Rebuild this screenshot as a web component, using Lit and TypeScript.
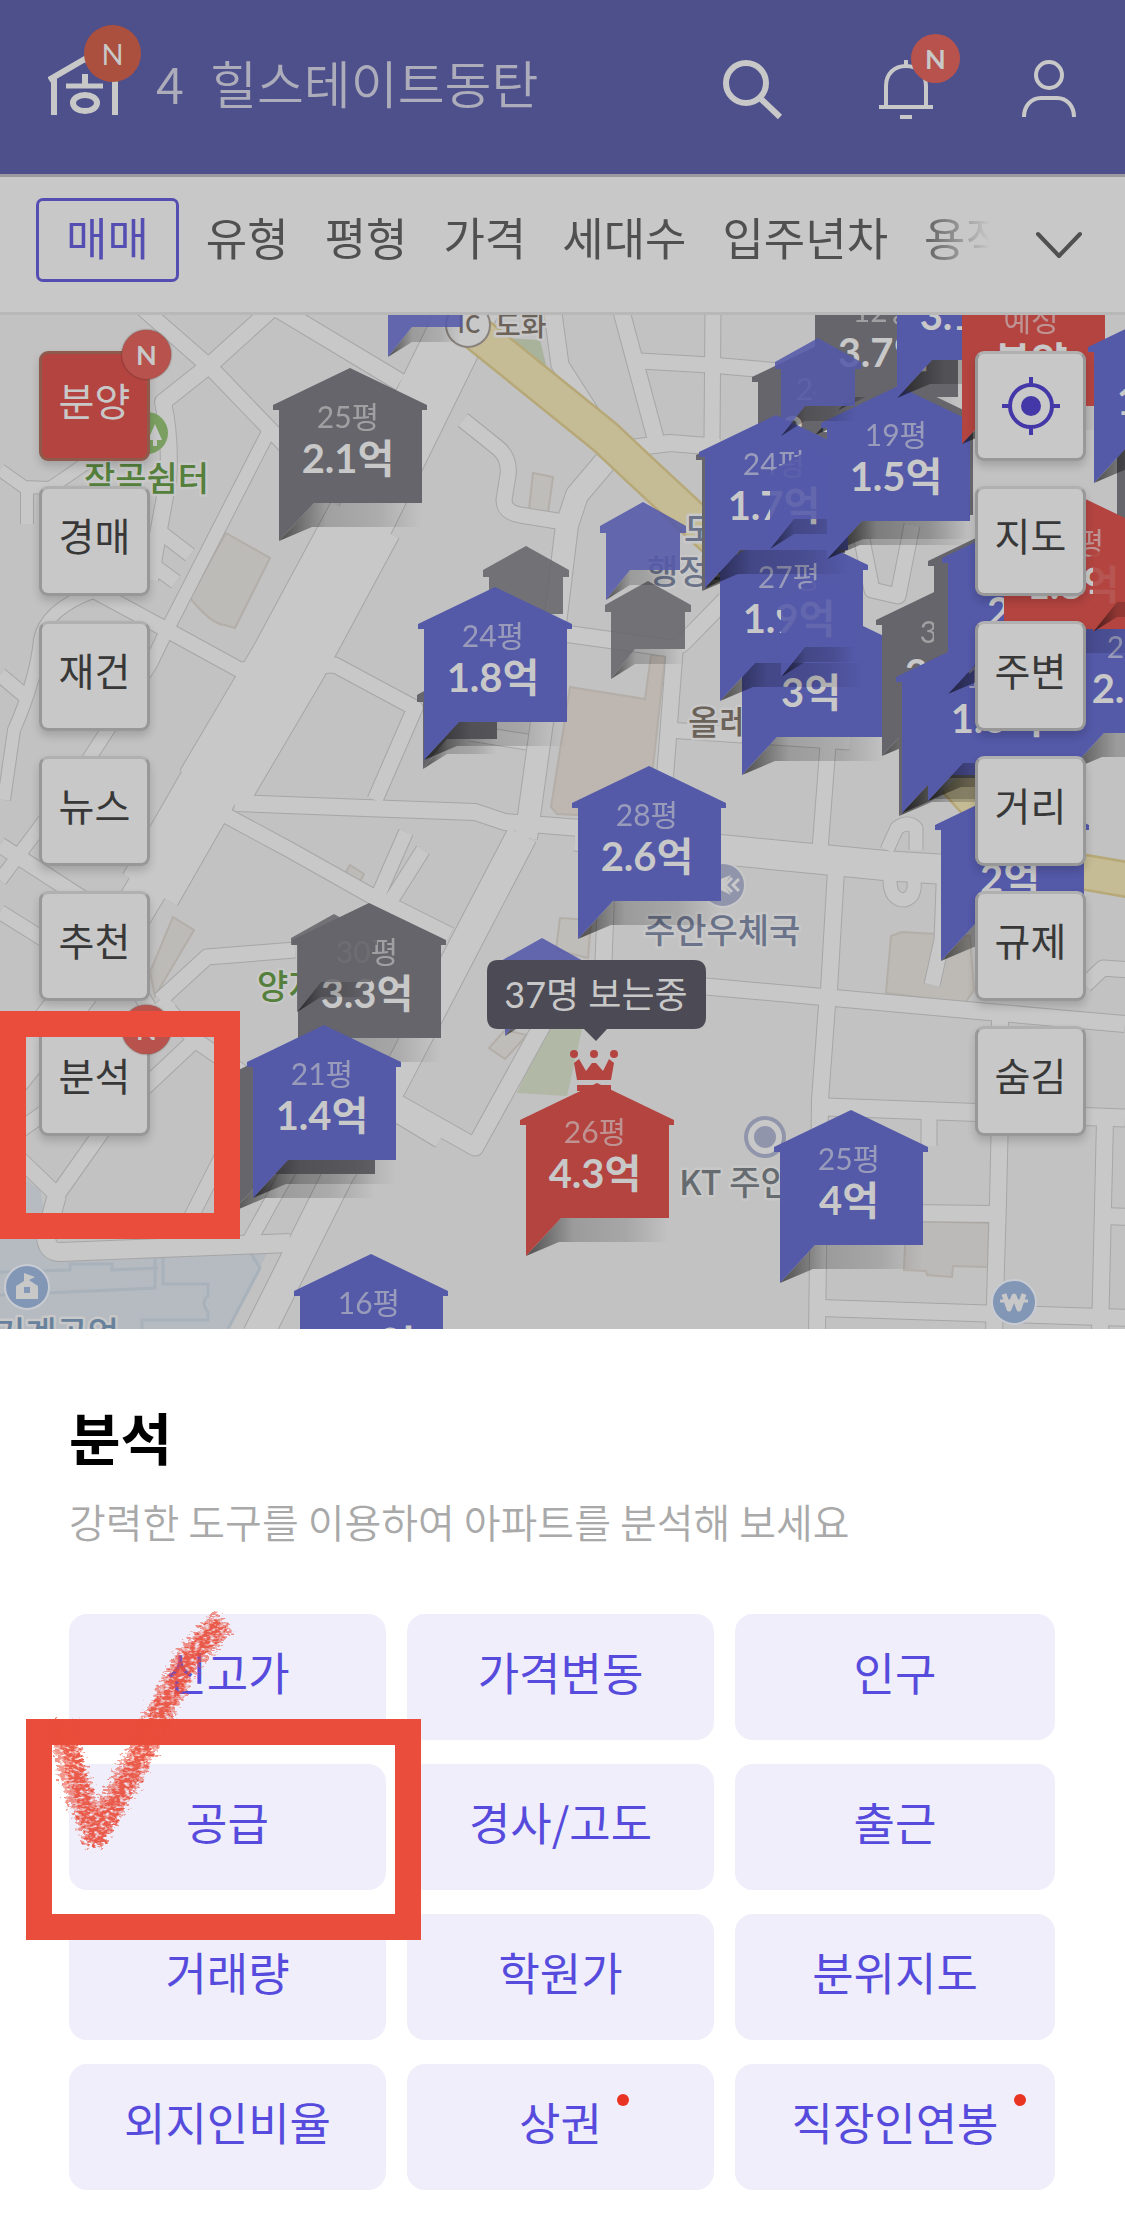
import { LitElement, html, svg, css, nothing } from "lit";
import { customElement } from "lit/decorators.js";
import { classMap } from "lit/directives/class-map.js";

type Tone = "blue" | "gray" | "red";

interface Pin {
  x: number;
  y: number;
  tone: Tone;
  mini?: boolean;
  faded?: boolean;
  size?: string;
  price?: string;
}

const pin = (x: number, y: number, tone: Tone, size = "", price = ""): Pin => ({ x, y, tone, size, price });
const mini = (x: number, y: number, tone: Tone, faded = true): Pin => ({ x, y, tone, mini: true, faded });

/* Listed from back to front. */
const PINS: Pin[] = [
  pin(350, 368, "gray", "25평", "2.1억"),
  mini(526, 546, "gray"),
  mini(460, 671, "gray", false),
  mini(648, 581, "gray"),
  mini(643, 502, "blue"),
  pin(495, 587, "blue", "24평", "1.8억"),
  pin(829, 340, "gray", "24평", "2.3억"),
  pin(886, 262, "gray", "12평", "3.7억"),
  pin(901, 380, "gray"),
  pin(773, 418, "gray"),
  pin(813, 602, "blue", "", "3억"),
  pin(791, 528, "blue", "27평", "1.9억"),
  mini(818, 579, "blue"),
  pin(776, 415, "blue", "24평", "1.7억"),
  mini(807, 451, "blue"),
  pin(898, 386, "blue", "19평", "1.5억"),
  mini(818, 338, "blue"),
  pin(968, 225, "blue", "", "3.1억"),
  pin(1033, 271, "red", "예정", "분양"),
  pin(1188, 400, "gray"),
  pin(1165, 310, "blue", "", "1.8억"),
  pin(953, 583, "gray", "33평", "3.2억"),
  pin(1005, 524, "gray"),
  pin(970, 643, "gray"),
  pin(973, 640, "blue"),
  pin(999, 628, "blue", "18평", "1.6억"),
  pin(1140, 598, "blue", "25평", "2.1억"),
  pin(1019, 521, "blue", "", "2억"),
  pin(1075, 494, "red", "23평", "1.8억"),
  mini(1130, 534, "red"),
  pin(1012, 788, "blue", "", "2억"),
  pin(649, 766, "blue", "28평", "2.6억"),
  mini(542, 938, "blue"),
  pin(369, 903, "gray", "30평", "3.3억"),
  mini(334, 914, "gray"),
  pin(303, 1039, "gray"),
  pin(324, 1025, "blue", "21평", "1.4억"),
  pin(597, 1083, "red", "26평", "4.3억"),
  pin(851, 1110, "blue", "25평", "4억"),
  pin(371, 1254, "blue", "16평", "1.5억"),
  mini(425, 259, "blue"),
];

/* [width, path] */
const ROADS: [number, string][] = [
  [15, "M140 306L211 368L285 445"],
  [16, "M275 306L211 364L163 402Q171 440 168 480L157 540L150 580"],
  [17, "M270 304L400 382"],
  [13, "M272 425L167 630L150 665L75 780L0 880"],
  [58, "M478 290L365 520L288 663"],
  [76, "M365 520L288 663L213 790"],
  [62, "M213 780L150 890"],
  [40, "M170 850L110 950L0 1090"],
  [15, "M93 590L167 630L240 670L335 665L415 708L375 800"],
  [14, "M155 528L190 555M146 560L176 582"],
  [12, "M0 470L24 487L50 488L88 462M27 490L27 524"],
  [12, "M93 592Q45 610 40 640Q36 680 14 730L4 800"],
  [14, "M0 675L30 700"],
  [16, "M235 803L365 808L475 812L505 822L580 828"],
  [29, "M575 836L725 850L890 866L1020 874"],
  [15, "M225 815L290 850L370 895L450 935"],
  [15, "M463 420L498 448Q510 458 508 475L504 500Q504 512 520 515L570 523"],
  [22, "M605 462L577 495L567 525L553 640L545 700L526 838"],
  [15, "M470 733L527 742"],
  [30, "M522 835L462 950L392 1085L338 1175L258 1335"],
  [14, "M385 910L423 850M374 905L406 832"],
  [17, "M552 306L560 365L592 415"],
  [16, "M620 306L656 440"],
  [15, "M713 306L712 440"],
  [15, "M640 361L710 365L780 371"],
  [16, "M615 450L670 443L720 447"],
  [16, "M553 632L668 648Q678 648 684 642L725 600"],
  [16, "M675 645L664 790"],
  [15, "M668 730L742 735L850 742"],
  [15, "M828 745L820 850"],
  [16, "M836 870L829 990L827 1005L820 1100L817 1335"],
  [16, "M700 986L823 997L1000 1013L1125 1024"],
  [16, "M606 895L603 975"],
  [17, "M826 1107L1125 1118"],
  [15, "M929 1115L929 1146"],
  [16, "M1000 1020L1000 1115L998 1200L994 1335"],
  [16, "M1105 1120L1100 1335"],
  [16, "M820 1212L995 1214M1100 1216L1130 1217"],
  [16, "M820 1308L1130 1318"],
  [13, "M887 850L897 828Q908 820 916 828L916 850M890 880Q890 900 905 900Q916 896 914 880"],
  [15, "M945 860L942 940L932 985"],
  [15, "M1085 985L1103 968L1130 970"],
  [15, "M862 540L872 590L898 596L912 525"],
  [15, "M0 845L85 900L150 1010"],
  [14, "M0 912L48 942"],
  [15, "M295 950L207 957L160 1000"],
  [15, "M160 1000L195 1040L110 1120L57 1195L0 1140M195 1040L260 1085"],
  [15, "M170 1000L120 1060L20 1130"],
  [18, "M57 1195L46 1235Q46 1252 60 1252L290 1243"],
  [14, "M225 1150L182 1235"],
  [14, "M250 1240L300 1150"],
  [17, "M388 1098L475 1147L545 1020L560 985"],
  [16, "M390 1110L440 1140"],
];

const LAND: [string, string][] = [
  ["#beb6b0", "M570 687L645 699L651 655L665 656L653 767L577 815L557 814L551 807Z"],
  ["#bdbbb8", "M226 533L270 558L235 628L225 625Q212 625 190 598Z"],
  ["#bdbbb8", "M173 917L194 930L155 996L150 972Z"],
  ["#bfbdb9", "M533 473L553 477L548 513L529 510Z"],
  ["#bdbbb7", "M350 865L364 874L356 889L340 882Z"],
  ["#bfbdb9", "M560 918L591 920L588 958L556 950Z"],
  ["#bfbdb9", "M505 1030L527 1035L505 1059L489 1048Z"],
  ["#bdbab5", "M891 936L902 932L970 936L974 990L965 1003L886 993Z"],
  ["#bcbab8", "M906 1221L989 1223L988 1267L953 1266L952 1277L927 1275L926 1271L904 1270Z"],
];

const LEFT_TOOLS = [
  { name: "분양", hot: true, fresh: true },
  { name: "경매" },
  { name: "재건" },
  { name: "뉴스" },
  { name: "추천" },
  { name: "분석", fresh: true, framed: true },
] as { name: string; hot?: boolean; fresh?: boolean; framed?: boolean }[];

const RIGHT_TOOLS = ["지도", "주변", "거리", "규제", "숨김"];
const FILTERS = ["매매", "유형", "평형", "가격", "세대수", "입주년차", "용적률"];

const MENU = [
  { name: "신고가" },
  { name: "가격변동" },
  { name: "인구" },
  { name: "공급", marked: true },
  { name: "경사/고도" },
  { name: "출근" },
  { name: "거래량" },
  { name: "학원가" },
  { name: "분위지도" },
  { name: "외지인비율" },
  { name: "상권", dot: true },
  { name: "직장인연봉", dot: true },
] as { name: string; marked?: boolean; dot?: boolean }[];

@customElement("area-map")
export class AreaMap extends LitElement {
  static styles = css`
    :host {
      display: block;
    }
    .map {
      display: block;
      width: 100%;
      height: auto;
      font-family: Lato, "Noto Sans CJK KR", sans-serif;
    }
    .casing {
      fill: none;
      stroke: #a6a6a6;
      stroke-linejoin: round;
    }
    .road {
      fill: none;
      stroke: #c8c8c8;
      stroke-linejoin: round;
    }
    .highway-edge {
      stroke: #b7a878;
    }
    .highway {
      stroke: #c5bc95;
    }
    .blue {
      fill: #5459a8;
    }
    .gray {
      fill: #66656b;
    }
    .red {
      fill: #b34440;
    }
    .faded {
      opacity: 0.88;
    }
    .size {
      font-size: 30px;
      font-weight: 400;
      fill: #c8c8c8;
      opacity: 0.6;
      text-anchor: middle;
    }
    .price {
      font-size: 40px;
      font-weight: 700;
      fill: #c8c8c8;
      text-anchor: middle;
    }
    .place {
      font-family: "Noto Sans CJK KR", sans-serif;
      font-size: 34px;
      font-weight: 500;
      stroke: #c8c8c8;
      stroke-width: 5px;
      stroke-linejoin: round;
      paint-order: stroke;
      fill: #6b738a;
    }
    .park {
      fill: #54803c;
    }
    .stop {
      fill: #6b625a;
    }
    .firm {
      fill: #666b70;
    }
    .school {
      fill: #68819c;
    }
    .minor {
      font-size: 28px;
    }
    .exit {
      font-size: 24px;
      text-anchor: middle;
    }
    .tip {
      font-size: 36px;
      fill: #c8c8c8;
      text-anchor: middle;
    }
  `;

  private pinShape(p: Pin) {
    if (p.mini) {
      return svg`<g transform="translate(${p.x} ${p.y})">
        <path fill="url(#shade)" d="M-37 98L-13 68H37V83H-13Z"></path>
        <path class=${`${p.tone} ${p.faded ? "faded" : ""}`}
          d="M0 0L43 24V31H37V68H-13L-37 98V31H-43V24Z"></path>
      </g>`;
    }
    return svg`<g transform="translate(${p.x} ${p.y})">
      <path fill="url(#shade)" d="M-71 173L-36 135H72V159H-38Z"></path>
      <path class=${p.tone} d="M0 0L77 37V42H72V135H-36L-71 173V42H-77V37Z"></path>
      ${p.size ? svg`<text class="size" x="-2" y="60">${p.size}</text>` : nothing}
      ${p.price ? svg`<text class="price" x="-2" y="105">${p.price}</text>` : nothing}
    </g>`;
  }

  render() {
    return html`
      <svg class="map" viewBox="0 315 1125 1014" role="img" aria-label="아파트 시세 지도">
        <defs>
          <linearGradient id="shade">
            <stop offset="0" stop-color="#000" stop-opacity="0.6"></stop>
            <stop offset="0.33" stop-color="#000" stop-opacity="0.2"></stop>
            <stop offset="0.7" stop-color="#000" stop-opacity="0.14"></stop>
            <stop offset="1" stop-color="#000" stop-opacity="0"></stop>
          </linearGradient>
        </defs>
        <rect y="315" width="1125" height="1014" fill="#c2c2c2"></rect>
        <path fill="#b5bbc1" d="M0 1160L40 1190L52 1250L268 1252L228 1329H0Z"></path>
        <path fill="none" stroke="#a9b1ba" stroke-width="3"
          d="M0 1272L70 1270V1264H112V1270L158 1268M0 1295L155 1288V1256M163 1256V1284H208V1296Q200 1302 208 1312V1320H142V1329M250 1252L260 1268L228 1329"></path>
        ${LAND.map(([fill, d]) => svg`<path d=${d} fill=${fill} stroke="#b3aea8" stroke-width="2"></path>`)}
        <path fill="#b1b8a6" d="M547 1029H582L567 1096L517 1093Z"></path>
        ${ROADS.map(([w, d]) => svg`<path class="casing" d=${d} stroke-width=${w + 2}></path>`)}
        ${ROADS.map(([w, d]) => svg`<path class="road" d=${d} stroke-width=${w}></path>`)}
        <path fill="#a9b39b" d="M503 338L540 340L548 373Z"></path>
        <path class="casing highway-edge" stroke-width="37"
          d="M475 332L605 437L640 470L722 546M955 780L1005 835L1060 868L1130 880"></path>
        <path class="road highway" stroke-width="32"
          d="M475 332L605 437L640 470L722 546M955 780L1005 835L1060 868L1130 880"></path>

        <circle cx="468" cy="325" r="22" fill="#c8c8c8" stroke="#8a827c" stroke-width="2"></circle>
        <text class="place stop exit" x="469" y="333">IC</text>
        <text class="place stop minor" x="495" y="336">도화</text>
        <circle cx="147" cy="433" r="21" fill="#7a9f60"></circle>
        <path fill="#c8c8c8" d="M155 424L162 440H157V446H153V440H148Z"></path>
        <text class="place park" x="84" y="491">작곡쉼터</text>
        <text class="place park" x="257" y="999">양지</text>
        <text class="place" x="684" y="542">도화</text>
        <text class="place" x="647" y="584">행정복지</text>
        <text class="place stop" x="688" y="735">올레</text>
        <circle cx="723" cy="885" r="22" fill="#9095ab" stroke="#c8c8c8" stroke-width="2"></circle>
        <path fill="none" stroke="#c8c8c8" stroke-width="3" d="M732 878L725 885L732 892M739 879L733 885L739 891"></path>
        <path fill="#c8c8c8" d="M708 884L731 875L724 885L731 895Z"></path>
        <text class="place" x="644" y="943">주안우체국</text>
        <circle cx="765" cy="1137" r="21" fill="#9095ab"></circle>
        <circle cx="765" cy="1137" r="14" fill="none" stroke="#c8c8c8" stroke-width="6"></circle>
        <text class="place firm" x="679" y="1195">KT 주안</text>
        <circle cx="27" cy="1287" r="22" fill="#8296b6" stroke="#c8ccd2" stroke-width="2"></circle>
        <path fill="#c8c8c8" d="M24 1273L35 1277L29 1280L38 1286V1299H16V1286L24 1281Z"></path>
        <path fill="#8296b6" d="M24 1287H30V1293H24Z"></path>
        <text class="place school" x="-6" y="1346">기계공업</text>
        <circle cx="1014" cy="1302" r="22" fill="#8296b6" stroke="#c8ccd2" stroke-width="2"></circle>
        <path fill="none" stroke="#c8c8c8" stroke-width="5" stroke-linejoin="round"
          d="M1004 1294L1009 1309L1014 1296L1019 1309L1024 1294"></path>
        <path stroke="#c8c8c8" stroke-width="3" d="M1000 1301H1028"></path>

        ${PINS.map((p) => this.pinShape(p))}

        <g class="red">
          <circle cx="574" cy="1054" r="4"></circle>
          <circle cx="594" cy="1054" r="4"></circle>
          <circle cx="614" cy="1054" r="4"></circle>
          <path d="M574 1063L579 1059L586 1071L592 1063H596L603 1071L609 1059L614 1063L611 1080H577Z"></path>
          <path d="M577 1085H611V1091H577Z"></path>
        </g>
        <path fill="#4c4a54" d="M498 960H694Q706 960 706 972V1017Q706 1029 694 1029H607L596 1041L584 1029H498Q487 1029 487 1017V972Q487 960 498 960Z"></path>
        <text class="tip" x="596" y="1008">37명 보는중</text>
      </svg>
    `;
  }
}

@customElement("app-root")
export class AppRoot extends LitElement {
  static styles = css`
    :host {
      display: block;
      background: #fff;
      font-family: "Noto Sans CJK KR", sans-serif;
    }
    * {
      box-sizing: border-box;
    }
    button {
      margin: 0;
      padding: 0;
      border: 0;
      background: none;
      font: inherit;
      color: inherit;
      cursor: pointer;
    }
    svg {
      display: block;
    }

    .top {
      display: flex;
      align-items: center;
      height: 177px;
      padding: 0 46px 4px 48px;
      background: #4e508c;
      border-bottom: 3px solid #9b9a9e;
    }
    .logo {
      position: relative;
      width: 72px;
    }
    .rank {
      display: flex;
      gap: 26px;
      margin-left: 36px;
      padding-bottom: 6px;
      font-size: 51px;
      line-height: 60px;
      font-weight: 350;
      color: #adacba;
      text-decoration: none;
    }
    .icons {
      display: flex;
      gap: 83px;
      margin-left: auto;
      padding-top: 10px;
    }
    .icon {
      position: relative;
      width: 60px;
      height: 60px;
      fill: none;
      stroke: #c8c8c8;
    }
    .search {
      margin-right: 10px;
    }
    .badge {
      position: absolute;
      display: flex;
      align-items: center;
      justify-content: center;
      width: 49px;
      height: 49px;
      border-radius: 50%;
      background: #b7534c;
      color: #c8c8c8;
      font-family: Lato, sans-serif;
      font-size: 27px;
      font-weight: 700;
      line-height: 1;
    }
    .badge-logo {
      left: 36px;
      top: -30px;
      width: 57px;
      height: 57px;
      background: #ab4f3e;
      font-size: 29px;
      font-weight: 400;
    }
    .badge-bell {
      left: 35px;
      top: -26px;
    }
    .badge-tool {
      left: 83px;
      top: -21px;
      box-shadow: 0 0 2px #5c2a27;
    }

    .filters {
      display: flex;
      align-items: center;
      height: 138px;
      padding: 0 38px 10px 36px;
      background: #c8c8c8;
      border-bottom: 3px solid #b8b8b8;
    }
    .list {
      display: flex;
      flex: 1;
      min-width: 0;
      overflow: hidden;
      mask-image: linear-gradient(90deg, #000 calc(100% - 76px), transparent);
    }
    .filter {
      flex: none;
      height: 84px;
      padding: 0 18px 6px;
      font-size: 45px;
      line-height: 64px;
      color: #505050;
    }
    .filter.on {
      margin-right: 9px;
      padding: 0 27px 6px;
      border: 3px solid #544db2;
      border-radius: 7px;
      color: #544db2;
    }
    .more {
      display: flex;
      align-items: center;
      justify-content: center;
      width: 56px;
      height: 84px;
      margin-left: 41px;
      padding-top: 10px;
    }

    .stage {
      position: relative;
      display: grid;
      grid-template-columns: auto 1fr auto;
      align-items: start;
      overflow: hidden;
    }
    .stage area-map {
      grid-area: 1 / 1 / 2 / 4;
    }
    .tools {
      position: relative;
      display: grid;
      gap: 25px;
      grid-row: 1;
      padding: 36px 39px;
    }
    .tools-left {
      grid-column: 1;
    }
    .tools-right {
      grid-column: 3;
    }
    .cell {
      position: relative;
    }
    .tool {
      display: flex;
      align-items: center;
      justify-content: center;
      width: 111px;
      height: 110px;
      padding-bottom: 14px;
      border: 3px solid #989898;
      border-top-color: #b0b0b0;
      border-radius: 9px;
      background: #c8c8c8;
      box-shadow: 0 5px 8px rgba(0, 0, 0, 0.16);
      font-size: 39px;
      color: #383838;
    }
    .tool.hot {
      background: #b34440;
      border-color: #8f5a4c;
      color: #c8c8c8;
    }
    .tool.locate {
      padding: 0;
    }
    .frame {
      position: absolute;
      border: 26px solid #ea4d3b;
      pointer-events: none;
    }
    .frame-tool {
      inset: -15px -90px -103px -39px;
    }
    .frame-item {
      inset: -45px -35px -50px -43px;
      z-index: 1;
    }

    .sheet {
      padding: 75px 70px 41px 69px;
      background: #fff;
    }
    .title {
      margin: 0;
      font-size: 56px;
      line-height: 64px;
      font-weight: 700;
      color: #000;
    }
    .lead {
      margin: 29px 0 0;
      font-size: 40px;
      line-height: 48px;
      font-weight: 350;
      color: #a9a9a9;
    }
    .menu {
      display: grid;
      grid-template-columns: 317fr 307fr 320fr;
      gap: 24px 21px;
      margin-top: 69px;
    }
    .item {
      display: block;
      width: 100%;
      height: 126px;
      padding-bottom: 11px;
      border-radius: 18px;
      background: #efeefa;
      font-size: 45px;
      color: #564bdc;
    }
    .word {
      position: relative;
    }
    .dot {
      position: absolute;
      left: calc(100% + 15px);
      top: 5px;
      width: 12px;
      height: 12px;
      border-radius: 50%;
      background: #e93323;
    }
    .check {
      position: absolute;
      left: -29px;
      top: -159px;
      z-index: 2;
      pointer-events: none;
    }
  `;

  private newBadge(kind: string) {
    return html`<span class="badge ${kind}">N</span>`;
  }

  render() {
    return html`
      <header class="top">
        <a class="logo" href="#" aria-label="홈">
          <svg width="72" height="60" viewBox="0 0 72 60" fill="none" stroke="#c8c8c8" stroke-width="6">
            <path d="M6 60V24M1 25L37 4L70 24M67 20V60M37 19V31"></path>
            <path stroke-width="5" d="M18 31H55"></path>
            <ellipse cx="37" cy="48" rx="12" ry="8"></ellipse>
          </svg>
          ${this.newBadge("badge-logo")}
        </a>
        <a class="rank" href="#"><span>4</span><span>힐스테이트동탄</span></a>
        <div class="icons">
          <button class="icon search" aria-label="검색">
            <svg width="60" height="60" viewBox="0 0 60 60" stroke-width="6">
              <circle cx="23" cy="23" r="20"></circle>
              <path d="M36 37L57 57"></path>
            </svg>
          </button>
          <button class="icon" aria-label="알림">
            <svg width="60" height="60" viewBox="0 0 60 60" stroke-width="4">
              <path d="M30 0V6M10 47V26C10 14 18 6 30 6S50 14 50 26V47M3 47H57M24 57H36"></path>
            </svg>
            ${this.newBadge("badge-bell")}
          </button>
          <button class="icon" aria-label="내 정보">
            <svg width="60" height="60" viewBox="0 0 60 60" stroke-width="4">
              <circle cx="30" cy="15" r="13"></circle>
              <path d="M5 57C5 46 12 38 22 38H38C48 38 55 46 55 57"></path>
            </svg>
          </button>
        </div>
      </header>

      <nav class="filters" aria-label="필터">
        <div class="list">
          ${FILTERS.map((name, i) => html`<button class=${classMap({ filter: true, on: i === 0 })}>${name}</button>`)}
        </div>
        <button class="more" aria-label="필터 더보기">
          <svg width="48" height="28" viewBox="0 0 48 28" fill="none" stroke="#505050" stroke-width="4" stroke-linecap="round" stroke-linejoin="round">
            <path d="M3 3L24 25L45 3"></path>
          </svg>
        </button>
      </nav>

      <main>
        <section class="stage">
          <area-map></area-map>
          <div class="tools tools-left">
            ${LEFT_TOOLS.map(
              (t) => html`<div class="cell">
                <button class=${classMap({ tool: true, hot: !!t.hot })}>${t.name}</button>
                ${t.fresh ? this.newBadge("badge-tool") : nothing}
                ${t.framed ? html`<div class="frame frame-tool"></div>` : nothing}
              </div>`
            )}
          </div>
          <div class="tools tools-right">
            <button class="tool locate" aria-label="현재 위치">
              <svg width="58" height="58" viewBox="0 0 58 58" fill="none" stroke="#4438a8" stroke-width="4">
                <circle cx="29" cy="29" r="21"></circle>
                <circle cx="29" cy="29" r="10" fill="#4438a8" stroke="none"></circle>
                <path d="M29 0V8M29 50V58M0 29H8M50 29H58"></path>
              </svg>
            </button>
            ${RIGHT_TOOLS.map((name) => html`<button class="tool">${name}</button>`)}
          </div>
        </section>

        <section class="sheet">
          <h1 class="title">분석</h1>
          <p class="lead">강력한 도구를 이용하여 아파트를 분석해 보세요</p>
          <div class="menu">
            ${MENU.map(
              (m) => html`<div class="cell">
                <button class="item">
                  <span class="word">${m.name}${m.dot ? html`<i class="dot"></i>` : nothing}</span>
                </button>
                ${m.marked ? html`<div class="frame frame-item"></div>${this.checkMark()}` : nothing}
              </div>`
            )}
          </div>
        </section>
      </main>
    `;
  }

  private checkMark() {
    return html`
      <svg class="check" width="200" height="250" viewBox="40 1605 200 250" aria-hidden="true">
        <defs>
          <filter id="crayon" x="-20%" y="-20%" width="140%" height="140%" color-interpolation-filters="sRGB">
            <feTurbulence type="fractalNoise" baseFrequency="0.2 0.35" numOctaves="2" seed="4" result="noise"></feTurbulence>
            <feDisplacementMap in="SourceGraphic" in2="noise" scale="20" xChannelSelector="R" yChannelSelector="G" result="rough"></feDisplacementMap>
            <feColorMatrix in="noise" type="matrix" values="0 0 0 0 0  0 0 0 0 0  0 0 0 0 0  0 0 0 3 -0.6" result="grain"></feColorMatrix>
            <feComposite in="rough" in2="grain" operator="in"></feComposite>
          </filter>
        </defs>
        <g filter="url(#crayon)" fill="none" stroke="#ea4d3b" stroke-linejoin="round">
          <path stroke-width="27" opacity="0.6" d="M61 1722L74 1778L95 1834L133 1768L163 1707L189 1658L224 1621"></path>
          <path stroke-width="17" opacity="0.8" d="M64 1722L77 1778L96 1838L133 1770L163 1707L190 1657L221 1624"></path>
        </g>
      </svg>
    `;
  }
}
